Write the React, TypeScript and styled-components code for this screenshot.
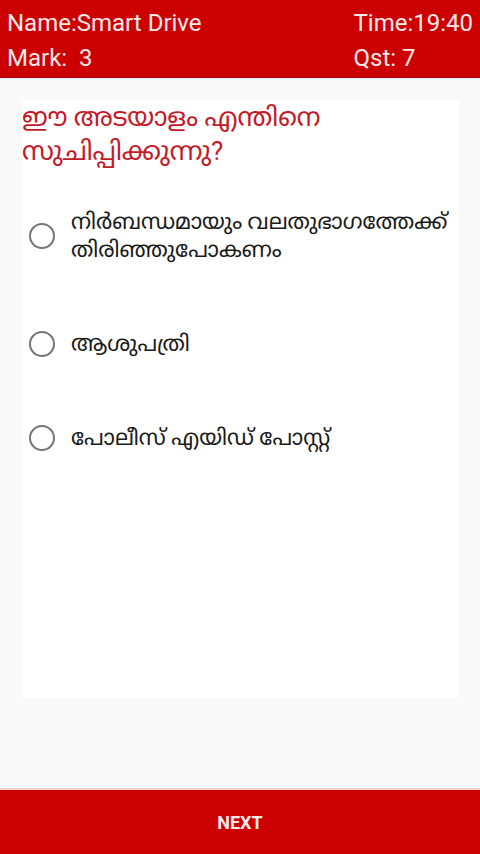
import { createGlobalStyle, styled } from 'styled-components';

const GlobalStyle = createGlobalStyle`
  html, body {
    margin: 0;
    padding: 0;
    background: #f9f9f9;
  }
  body {
    font-family: Roboto, 'Noto Sans', 'Noto Sans Malayalam', sans-serif;
  }
`;

const options = [
  'നിർബന്ധമായും വലതുഭാഗത്തേക്ക് തിരിഞ്ഞുപോകണം',
  'ആശുപത്രി',
  'പോലീസ് എയിഡ് പോസ്റ്റ്',
];

export default function App() {
  return (
    <Page>
      <GlobalStyle />
      <Header>
        <span>Name:Smart Drive</span>
        <span>Time:19:40</span>
        <span>Mark:&nbsp; 3</span>
        <span>Qst: 7</span>
      </Header>
      <Main>
        <Card>
          <Question>ഈ അടയാളം എന്തിനെ സുചിപ്പിക്കുന്നു?</Question>
          <OptionList>
            {options.map((o) => (
              <Option key={o}>
                <Radio />
                <OptionText>{o}</OptionText>
              </Option>
            ))}
          </OptionList>
        </Card>
      </Main>
      <NextBar>NEXT</NextBar>
    </Page>
  );
}

const Page = styled.div`
  height: 854px;
  display: flex;
  flex-direction: column;
  background: #f9f9f9;
`;

const Header = styled.header`
  flex: none;
  display: grid;
  grid-template-columns: 1fr auto;
  background: #cc0000;
  color: #fbe9e9;
  padding: 7px 7px 0 7px;
  height: 78px;
  box-sizing: border-box;
  border-bottom: 1px solid #a80000;
  font-size: 24px;
  line-height: 33px;
`;

const Main = styled.main`
  flex: 1;
  padding: 22px 21px 90px 22px;
  display: flex;
`;

const Card = styled.section`
  flex: 1;
  background: #ffffff;
`;

const Question = styled.h2`
  margin: 0;
  padding: 0 20px 0 0;
  color: #c41a28;
  font-weight: 400;
  font-size: 26px;
  line-height: 34px;
`;

const OptionList = styled.div`
  display: flex;
  flex-direction: column;
  gap: 66px;
  margin-top: 40px;
  padding-left: 7px;
`;

const Option = styled.label`
  display: flex;
  align-items: center;
  gap: 16px;
`;

const Radio = styled.span`
  flex: none;
  width: 22px;
  height: 22px;
  border: 2px solid #757575;
  border-radius: 50%;
`;

const OptionText = styled.span`
  color: #1a1a1a;
  font-size: 22px;
  line-height: 28px;
  padding-right: 8px;
`;

const NextBar = styled.footer`
  height: 64px;
  flex: none;
  background: #cc0000;
  color: #fbe9e9;
  font-weight: 700;
  font-size: 18px;
  display: flex;
  align-items: center;
  justify-content: center;
  border-top: 2px solid #f0d0d0;
`;
